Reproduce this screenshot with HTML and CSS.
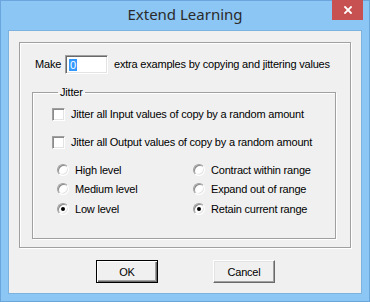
FILE: index.html
```html
<!DOCTYPE html>
<html lang="en">
<head>
  <meta charset="UTF-8" />
  <title>Extend Learning</title>
  <meta name="viewport" content="width=device-width, initial-scale=1.0"/>
  <link rel="stylesheet" href="styles.css">
</head>
<body>

<div class="window">
  <div class="titlebar">
    <span></span>
    <h1 class="title">Extend Learning</h1>
    <button class="close" type="button" aria-label="Close">
      <svg width="8" height="8" viewBox="0 0 8 8"><path d="M1 1L7 7M7 1L1 7" stroke="#fff" stroke-width="1.8" stroke-linecap="square"/></svg>
    </button>
  </div>

  <div class="client">
    <div class="group">
      <div class="make-row">
        <span class="make-label">Make</span>
        <span class="count"><span class="sel">0</span></span>
        <span class="make-text">extra examples by copying and jittering values</span>
      </div>

      <fieldset class="jitter">
        <legend>Jitter</legend>
        <label class="check"><span class="box"></span>Jitter all Input values of copy by a random amount</label>
        <label class="check"><span class="box"></span>Jitter all Output values of copy by a random amount</label>

        <div class="radios">
          <label class="radio"><span class="dot"></span>High level</label>
          <label class="radio"><span class="dot"></span>Contract within range</label>
          <label class="radio"><span class="dot"></span>Medium level</label>
          <label class="radio"><span class="dot"></span>Expand out of range</label>
          <label class="radio"><span class="dot on"></span>Low level</label>
          <label class="radio"><span class="dot on"></span>Retain current range</label>
        </div>
      </fieldset>
    </div>

    <div class="buttons">
      <button class="btn default" type="button">OK</button>
      <button class="btn" type="button">Cancel</button>
    </div>
  </div>
</div>

</body>
</html>
```

FILE: styles.css
```css
* { box-sizing: border-box; }
body { margin: 0; font-family: "Liberation Sans", Arial, sans-serif; font-size: 11px; letter-spacing: -0.2px; color: #000; }

.window { width: 370px; height: 302px; background: #8bc6f4; border: 1px solid #6aa6dc; }
.titlebar { height: 29px; display: grid; grid-template-columns: 1fr auto 1fr; align-items: start; }
.title { margin: 0; padding-top: 3px; font: 15px "Noto Sans", "Open Sans", sans-serif; letter-spacing: 0; color: #2b2b2b; }
.close { justify-self: end; margin-right: 6px; width: 31px; height: 20px; border: 0; padding: 0; background: #c75050; display: flex; align-items: center; justify-content: center; margin-top: -1px; }

.client { margin: 0 7px; height: 264px; background: #f0f0f0; border: 1px solid #7cb2e0; padding: 11px 0 0 10px; }

.group { width: 332px; height: 206px; border: 1px solid #a0a0a0; box-shadow: inset 1px 1px #fff, 1px 1px #fff; padding: 11px 0 0 12px; }

.make-row { display: flex; align-items: center; height: 20px; }
.make-label { width: 33px; padding-left: 3px; }
.count { width: 43px; height: 19px; background: #fff; border: 1px solid; border-color: #a0a0a0 #fff #fff #a0a0a0; box-shadow: inset 1px 1px #696969, inset -1px -1px #e3e3e3; padding: 3px 0 0 3px; line-height: 12px; }
.sel { background: #3399ff; color: #fff; padding: 0 1px; }
.make-text { margin-left: 6px; }

.jitter { margin: 12px 0 0 0; width: 304px; height: 153px; border: 1px solid #a0a0a0; box-shadow: inset 1px 1px #fff, 1px 1px #fff; padding: 9px 0 0 19px; }
.jitter legend { margin-left: 6px; padding: 0 2px; }

.check { display: flex; align-items: center; height: 14px; margin-bottom: 14px; }
.box { width: 13px; height: 13px; margin-right: 6px; background: #fff; border: 1px solid; border-color: #a0a0a0 #fff #fff #a0a0a0; box-shadow: inset 1px 1px #8a8a8a, inset -1px -1px #e3e3e3; }

.radios { display: grid; grid-template-columns: 136px 1fr; row-gap: 6.5px; margin-top: 5px; padding-left: 5px; }
.radio { display: flex; align-items: center; height: 13px; }
.dot { width: 12px; height: 12px; margin-right: 6px; border-radius: 50%; background: #fff; border: 1px solid; border-color: #a0a0a0 #fff #fff #a0a0a0; box-shadow: inset 1px 1px #8a8a8a, inset -1px -1px #e3e3e3; display: flex; align-items: center; justify-content: center; }
.dot.on::after { content: ""; width: 4px; height: 4px; border-radius: 50%; background: #000; }

.buttons { display: flex; margin-top: 12px; padding-left: 77px; gap: 55px; }
.btn { width: 62px; height: 23px; background: #f0f0f0; font: 11px "Liberation Sans", Arial, sans-serif; letter-spacing: -0.2px; color: #000; padding: 0; border: 1px solid; border-color: #fff #696969 #696969 #fff; box-shadow: inset -1px -1px #a0a0a0, inset 1px 1px #e3e3e3; }
.btn.default { border: 1px solid #000; box-shadow: inset 1px 1px #fff, inset -1px -1px #696969, inset -2px -2px #a0a0a0; }
```
